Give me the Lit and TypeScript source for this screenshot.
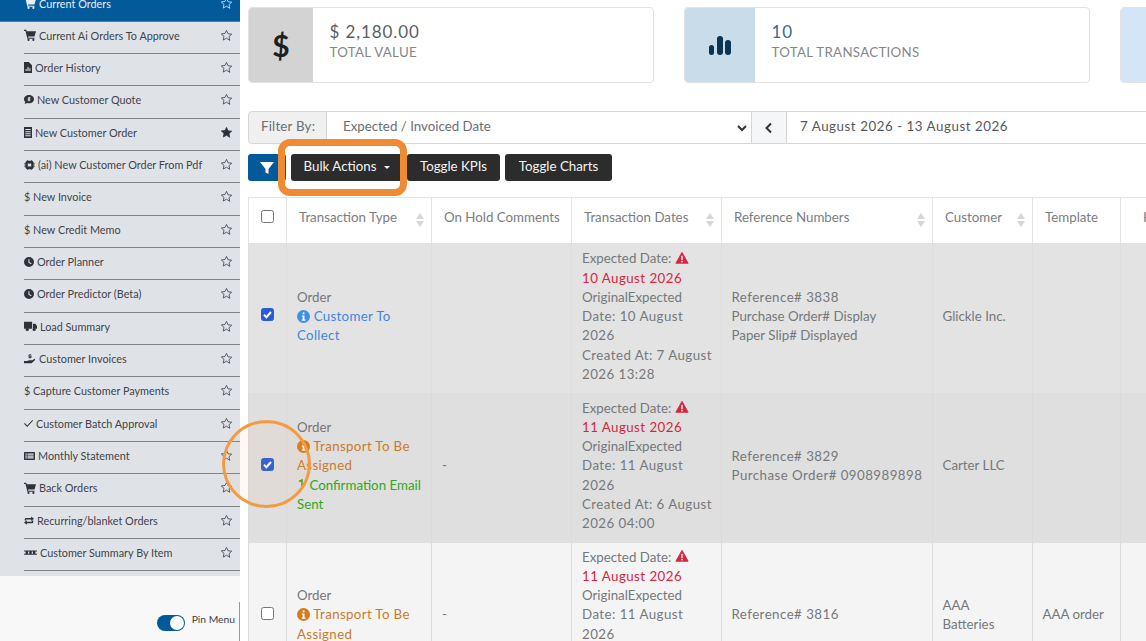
import { LitElement, html, css, svg } from 'lit';
import { customElement } from 'lit/decorators.js';

const star = (filled = false) => svg`<svg class="star" viewBox="0 0 24 24" width="13" height="13"><path d="M12 2.600l2.900 6.200 6.700.8-5 4.600 1.400 6.700L12 17l-6 3.400 1.400-6.700-5-4.600 6.700-.8z" fill=${filled ? '#2b2f36' : 'none'} stroke="#3a3f47" stroke-width="1.500" stroke-linejoin="round"/></svg>`;

// each icon: viewBox + shapes, drawn tight so the width in the menu data is the real width
const icons: Record<string, { vb: string; d: any }> = {
  cart: { vb: '0 0 16 16', d: svg`<path d="M0 1h3l.6 2H16l-2 7H5.500l.3 1.500H14V13H4.500L2 2.500H0z"/><circle cx="6" cy="14.500" r="1.400"/><circle cx="12.500" cy="14.500" r="1.400"/>` },
  file: { vb: '3 1 10 14', d: svg`<path d="M3 1h6l4 4v10H3zM5 12.500h1.300V10H5zm2.300 0h1.400V7.500H7.300zm2.400 0H11V9H9.700z" fill-rule="evenodd"/>` },
  quote: { vb: '0 2 16 13', d: svg`<path d="M8 2c4.400 0 8 2.700 8 6s-3.600 6-8 6c-1 0-2-.1-2.900-.4L1 15l1-3C.7 10.900 0 9.500 0 8c0-3.300 3.600-6 8-6zM7 5v1.200H6v1.600h3v.5H6V10h1v1h2v-1h1V7.200H7.500v-.5H10V5z" fill-rule="evenodd"/>` },
  doc: { vb: '2 1 12 16', d: svg`<path d="M2 1h12v16H2zM4 4v1.500h8V4zm0 3v1.500h8V7zm0 3v1.500h8V10zm0 3v1.500h8V13z" fill-rule="evenodd"/>` },
  chip: { vb: '0 1 16 14', d: svg`<path d="M4 2h8l2 2v8l-2 2H4l-2-2V4zM0 6h16v1H0zM0 9h16v1H0zM5 1h1v14H5zM10 1h1v14h-1z"/><rect x="5.500" y="6" width="5" height="4" fill="#dfe3e8"/>` },
  clock: { vb: '1 1 14 14', d: svg`<path d="M8 1a7 7 0 1 1 0 14A7 7 0 0 1 8 1zm-.8 3v5l3.800 2 .7-1.200-3-1.600V4z" fill-rule="evenodd"/>` },
  truck: { vb: '0 2 16 13', d: svg`<path d="M0 3h10v9H0zM11 5.500h3l2 3v3.500h-5z"/><circle cx="4" cy="13" r="2"/><circle cx="12.500" cy="13" r="2"/>` },
  hand: { vb: '0 2 16 13', d: svg`<path d="M0 11h4l3-1h4l4-2-.5 2-4.500 4H0zM7.300 2h1.400v1H10v1H7.300v.5H10V7H8.700v1H7.300V7H6V6h2.700v-.5H6V3h1.300z"/>` },
  check: { vb: '1 3 14 10', d: svg`<path d="M1 8.500l1.200-1.200L6 11l8-8 1 1.200L6 13z"/>` },
  list: { vb: '0 3 16 10', d: svg`<path d="M1 3h14a1 1 0 0 1 1 1v8a1 1 0 0 1-1 1H1a1 1 0 0 1-1-1V4a1 1 0 0 1 1-1zm1 2v1.500h2V5zm3 0v1.500h9V5zM2 7.300v1.500h2V7.300zm3 0v1.500h9V7.300zM2 9.500V11h2V9.500zm3 0V11h9V9.500z" fill-rule="evenodd"/>` },
  loop: { vb: '1 2 14 12', d: svg`<path d="M2 8V6.500C2 5 3 4.500 4 4.500h7V2.500L15 5.500l-4 3v-2H4.500c-.5 0-.7.2-.7.7V8zM14 8v1.500c0 1.500-1 2-2 2H5v2l-4-3 4-3v2h6.500c.5 0 .7-.2.7-.7V8z"/>` },
  pallet: { vb: '0 8 16 6.500', d: svg`<path d="M0 8.500h16v1.300H0zM0 13h16v1.300H0zM2 9.500h3V13H2zM6.500 9.500h3V13h-3zM11 9.500h3V13h-3z"/>` },
};

interface MenuItem { icon?: string; label: string; filled?: boolean; active?: boolean; w?: number; h?: number }

const menu: MenuItem[] = [
  { icon: 'cart', label: 'Current Orders', active: true, w: 12, h: 12 },
  { icon: 'cart', label: 'Current Ai Orders To Approve', w: 12, h: 12 },
  { icon: 'file', label: 'Order History', w: 8, h: 11 },
  { icon: 'quote', label: 'New Customer Quote', w: 10, h: 9 },
  { icon: 'doc', label: 'New Customer Order', filled: true, w: 8, h: 11 },
  { icon: 'chip', label: '(ai) New Customer Order From Pdf', w: 11, h: 10 },
  { label: '$ New Invoice' },
  { label: '$ New Credit Memo' },
  { icon: 'clock', label: 'Order Planner', w: 10, h: 10 },
  { icon: 'clock', label: 'Order Predictor (Beta)', w: 10, h: 10 },
  { icon: 'truck', label: 'Load Summary', w: 13, h: 10 },
  { icon: 'hand', label: 'Customer Invoices', w: 12, h: 10 },
  { label: '$ Capture Customer Payments' },
  { icon: 'check', label: 'Customer Batch Approval', w: 9, h: 7 },
  { icon: 'list', label: 'Monthly Statement', w: 11, h: 8 },
  { icon: 'cart', label: 'Back Orders', w: 12, h: 12 },
  { icon: 'loop', label: 'Recurring/blanket Orders', w: 10, h: 9 },
  { icon: 'pallet', label: 'Customer Summary By Item', w: 13, h: 5 },
];

const info = (color: string) => html`<svg class="info" viewBox="0 0 16 16" width="13" height="13"><circle cx="8" cy="8" r="8" fill=${color}/><rect x="7" y="3" width="2.200" height="2.200" fill="#fff"/><path d="M6 6.800h3.200v5H10.500v1.400H5.800v-1.400H7V8.200H6z" fill="#fff"/></svg>`;
const warn = html`<svg class="warn" viewBox="0 0 16 16" width="14" height="14"><path d="M8 1.500l7 12.500H1z" fill="#d7263d" stroke="#d7263d" stroke-linejoin="round"/><rect x="7.200" y="5.500" width="1.600" height="5" fill="#fff"/><rect x="7.200" y="11.300" width="1.600" height="1.700" fill="#fff"/></svg>`;
const sort = html`<span class="sort"><i class="up"></i><i class="down"></i></span>`;

@customElement('app-root')
export class AppRoot extends LitElement {
  static styles = css`
    :host {
      display: block;
      width: 1146px;
      height: 641px;
      overflow: hidden;
      position: relative;
      background: #fff;
      font-family: Lato, 'Open Sans', 'Liberation Sans', sans-serif;
      color: #6a6e73;
    }
    .page { display: flex; height: 641px; }

    .side { width: 240px; flex: none; background: #f8f8f8; display: flex; flex-direction: column; height: 641px; overflow: hidden; }
    .menu { background: #dfe3e8; height: 576px; flex: none; overflow: hidden; }
    .item { height: 32.33px; box-sizing: border-box; margin-left: 24px; border-bottom: 1px solid #7f8489; display: flex; align-items: center; font-size: 10.85px; color: #3f4349; padding-bottom: 4px; }
    .item svg.ic { fill: #2f3338; margin-right: 3px; flex: none; }
    .item .label { flex: 1; white-space: nowrap; }
    .item .star { margin-right: 7px; flex: none; }
    .item.active { margin-left: 0; padding-left: 24px; background: #035a9a; color: #e8eef4; height: 21.67px; border-bottom: 1px solid #4e7ea6; padding-bottom: 14px; }
    .item.active svg.ic { fill: #e8eef4; }
    .item.active .star path { stroke: #dfe8ef; }
    .pin { margin-top: 26px; flex: 1; display: flex; justify-content: flex-end; align-items: flex-start; padding: 11px 4px 0 0; font-size: 10.3px; color: #3f4349; border-right: 1px solid #9a9a9a; }
    .switch { width: 28px; height: 16px; border-radius: 8px; background: #035a9a; position: relative; margin: 2px 7px 0 0; }
    .switch::after { content: ''; position: absolute; right: 1px; top: 1px; width: 14px; height: 14px; border-radius: 50%; background: #fff; }

    .main { flex: 1; min-width: 0; padding: 7px 0 0 8px; overflow: hidden; }
    .cards { display: flex; gap: 30px; width: 1200px; }
    .card { width: 406px; height: 76px; box-sizing: border-box; border: 1px solid #e2e2e2; border-radius: 4px; display: flex; overflow: hidden; flex: none; }
    .card .tile { width: 64px; flex: none; display: flex; align-items: center; justify-content: center; }
    .card .tile.wide { width: 70px; }
    .card .body { padding: 13px 0 0 16.500px; }
    .card .val { font-size: 17px; line-height: 22px; color: #5c5f62; letter-spacing: .9px; }
    .card .cap { font-size: 13.3px; line-height: 17px; color: #84878a; letter-spacing: .3px; margin-top: 1px; }
    .dollar { font-size: 30px; font-weight: 700; color: #1d1f22; }

    .filter { display: flex; height: 33px; margin-top: 28px; width: 1000px; font-size: 13.3px; box-sizing: border-box; }
    .filter > div { border: 1px solid #d6d6d6; box-sizing: border-box; display: flex; align-items: center; padding-bottom: 3px; }
    .lbl { width: 79px; border-radius: 4px 0 0 4px; background: #f0f0f0; padding-left: 12px; letter-spacing: .2px; }
    .sel { width: 425px; border-left: 0 !important; padding-left: 16px; position: relative; white-space: pre; }
    .sel svg { position: absolute; right: 3px; top: 12px; }
    .prev { width: 35px; background: #f5f6f8; border-left: 0 !important; justify-content: center; padding-bottom: 0 !important; }
    .range { flex: 1; border-left: 0 !important; padding-left: 13px; letter-spacing: .55px; color: #55585b; }

    .tools { display: flex; margin-top: 10px; height: 27px; }
    .btn { background: #2c2c2c; color: #f3f3f3; border-radius: 3px; font-size: 13.3px; display: flex; align-items: center; justify-content: center; white-space: nowrap; padding-bottom: 3px; box-sizing: border-box; }
    .btn.blue { background: #035a9a; width: 38px; margin-right: 5px; padding-bottom: 0; }
    .btn.bulk { width: 112px; margin-right: 4px; }
    .btn.kpi { width: 93px; margin-right: 5px; }
    .btn.charts { width: 107px; }
    .caret { width: 0; height: 0; border: 3px solid transparent; border-top-color: #f3f3f3; border-bottom: 0; margin-left: 8px; margin-top: 2px; }

    table { border-collapse: collapse; table-layout: fixed; width: 898px; margin-top: 16px; font-size: 13.3px; line-height: 19.25px; }
    th { font-weight: 400; text-align: left; height: 45px; padding: 0 10px 4.500px 12px; white-space: nowrap; color: #7a7d80; border: 1px solid #e4e4e4; border-bottom: 0; position: relative; box-sizing: border-box; }
    th.last { padding-left: 22px; }
    td { padding: 0 0 0 10px; border-left: 1px solid #e6e6e6; vertical-align: middle; box-sizing: border-box; color: #75787b; white-space: nowrap; }
    td:nth-child(n+5) { padding-left: 9.500px; }
    td:first-child, th:first-child { padding: 0; text-align: center; }
    th:first-child { padding-bottom: 9px; }
    tr.r1 td { background: #e3e3e3; height: 150px; border-left-color: #dedede; padding-bottom: 1.500px; }
    tr.r2 td { background: #dfdfdf; height: 150px; border-left-color: #dadada; padding-bottom: 3px; }
    tr.r3 td { background: #f4f4f4; height: 150px; padding-bottom: 5px; border-left-color: #dcdcdc; }
    tr.r3 td.top { vertical-align: top; padding-top: 5px; }
    tr.r1 td:first-child { padding-bottom: 8px; }
    tr.r2 td:first-child { padding-bottom: 8px; }
    tr.r3 td:first-child { padding-bottom: 11px; }
    .num { letter-spacing: .45px; }
    .box { display: inline-block; width: 13px; height: 13px; box-sizing: border-box; border: 1px solid #767676; border-radius: 2.500px; background: #fff; vertical-align: middle; }
    .box.on { background: #2a5cd6; border-color: #2a5cd6; position: relative; }
    .box.on svg { position: absolute; left: -1px; top: -1px; }
    .sort { position: absolute; right: 7px; top: 15px; display: flex; flex-direction: column; gap: 2px; }
    .sort i { width: 0; height: 0; border: 4px solid transparent; }
    .sort .up { border-top: 0; border-bottom: 6px solid #d6d6d6; }
    .sort .down { border-bottom: 0; border-top: 6px solid #d6d6d6; }
    .info, .warn { vertical-align: -1.500px; }
    .blue-t { color: #3f86e0; letter-spacing: .3px; }
    .orange { color: #cc7a2b; letter-spacing: .35px; }
    .green { color: #2fa824; }
    .red { color: #d7263d; }

    .mark-rect { position: absolute; left: 278px; top: 139px; width: 129px; height: 57px; box-sizing: border-box; border: 7px solid #ef8c33; border-radius: 12px; }
    .mark-circle { position: absolute; left: 222px; top: 420px; width: 89px; height: 88px; box-sizing: border-box; border: 3.500px solid #f49a42; border-radius: 50%; background: rgba(240, 180, 120, .08); }
  `;

  private box(on: boolean) {
    return html`<span class="box ${on ? 'on' : ''}">${on ? html`<svg viewBox="0 0 13 13" width="13" height="13"><path d="M3 6.800l2.400 2.400L10 4" fill="none" stroke="#fff" stroke-width="2"/></svg>` : ''}</span>`;
  }

  render() {
    return html`
      <div class="page">
        <aside class="side">
          <div class="menu">
            ${menu.map(m => html`
              <div class="item ${m.active ? 'active' : ''}">
                ${m.icon ? html`<svg class="ic" viewBox=${icons[m.icon].vb} width=${m.w ?? 12} height=${m.h ?? 12} preserveAspectRatio="none">${icons[m.icon].d}</svg>` : ''}
                <span class="label">${m.label}</span>
                ${star(m.filled)}
              </div>`)}
          </div>
          <div class="pin"><span class="switch"></span><span>Pin Menu</span></div>
        </aside>
        <main class="main">
          <div class="cards">
            <div class="card">
              <div class="tile" style="background:#d3d3d3"><span class="dollar">$</span></div>
              <div class="body"><div class="val">$ 2,180.00</div><div class="cap">TOTAL VALUE</div></div>
            </div>
            <div class="card">
              <div class="tile wide" style="background:#c9dcea">
                <svg viewBox="0 0 24 24" width="24" height="24"><rect x="1" y="12" width="5" height="10" rx="2.500" fill="#0c3350"/><rect x="9" y="3" width="6" height="19" rx="3" fill="#0c3350"/><rect x="17" y="7" width="6" height="15" rx="3" fill="#0c3350"/></svg>
              </div>
              <div class="body"><div class="val" style="color:#3a6a94">10</div><div class="cap">TOTAL TRANSACTIONS</div></div>
            </div>
            <div class="card"><div class="tile" style="background:#d3e5f7"></div></div>
          </div>
          <div class="filter">
            <div class="lbl">Filter By:</div>
            <div class="sel">Expected / Invoiced Date<svg width="12" height="8" viewBox="0 0 12 8"><path d="M2 2l4 4 4-4" fill="none" stroke="#333" stroke-width="2"/></svg></div>
            <div class="prev"><svg width="10" height="12" viewBox="0 0 10 12"><path d="M7 1.500L2.500 6 7 10.500" fill="none" stroke="#333" stroke-width="2"/></svg></div>
            <div class="range">7 August 2026 - 13 August 2026</div>
          </div>
          <div class="tools">
            <div class="btn blue"><svg width="14" height="12" viewBox="0 0 14 12"><path d="M0 0h14L8.500 7v5l-3-1.500V7z" fill="#fff"/></svg></div>
            <div class="btn bulk">Bulk Actions<span class="caret"></span></div>
            <div class="btn kpi">Toggle KPIs</div>
            <div class="btn charts">Toggle Charts</div>
          </div>
          <table>
            <colgroup><col style="width:38px"><col style="width:145px"><col style="width:140px"><col style="width:150px"><col style="width:211px"><col style="width:100px"><col style="width:88px"><col style="width:26px"></colgroup>
            <tr>
              <th>${this.box(false)}</th>
              <th>Transaction Type${sort}</th>
              <th>On Hold Comments</th>
              <th>Transaction Dates${sort}</th>
              <th>Reference Numbers${sort}</th>
              <th>Customer${sort}</th>
              <th>Template</th>
              <th class="last">H</th>
            </tr>
            <tr class="r1">
              <td>${this.box(true)}</td>
              <td>Order<br><span class="blue-t">${info('#3f8fe6')} Customer To<br>Collect</span></td>
              <td></td>
              <td>Expected Date: ${warn}<br><span class="red num">10 August 2026</span><br>OriginalExpected<br><span class="num">Date: 10 August<br>2026</span><br><span class="num">Created At: 7 August<br>2026 13:28</span></td>
              <td><span class="num">Reference# 3838</span><br>Purchase Order# Display<br>Paper Slip# Displayed</td>
              <td>Glickle Inc.</td>
              <td></td>
              <td></td>
            </tr>
            <tr class="r2">
              <td>${this.box(true)}</td>
              <td>Order<br><span class="orange">${info('#d67a1c')} Transport To Be<br>Assigned</span><br><span class="green"><svg class="info" viewBox="0 0 9 13" width="9" height="13"><path d="M2 3.500L5 2v9" fill="none" stroke="#2fa824" stroke-width="1.500"/></svg> Confirmation Email<br>Sent</span></td>
              <td>-</td>
              <td>Expected Date: ${warn}<br><span class="red num">11 August 2026</span><br>OriginalExpected<br><span class="num">Date: 11 August<br>2026</span><br><span class="num">Created At: 6 August<br>2026 04:00</span></td>
              <td><span class="num">Reference# 3829<br>Purchase Order# 0908989898</span></td>
              <td>Carter LLC</td>
              <td></td>
              <td></td>
            </tr>
            <tr class="r3">
              <td>${this.box(false)}</td>
              <td>Order<br><span class="orange">${info('#d67a1c')} Transport To Be<br>Assigned</span></td>
              <td>-</td>
              <td class="top">Expected Date: ${warn}<br><span class="red num">11 August 2026</span><br>OriginalExpected<br><span class="num">Date: 11 August<br>2026</span></td>
              <td><span class="num">Reference# 3816</span></td>
              <td>AAA<br>Batteries</td>
              <td>AAA order</td>
              <td></td>
            </tr>
          </table>
        </main>
      </div>
      <div class="mark-rect"></div>
      <div class="mark-circle"></div>
    `;
  }
}
